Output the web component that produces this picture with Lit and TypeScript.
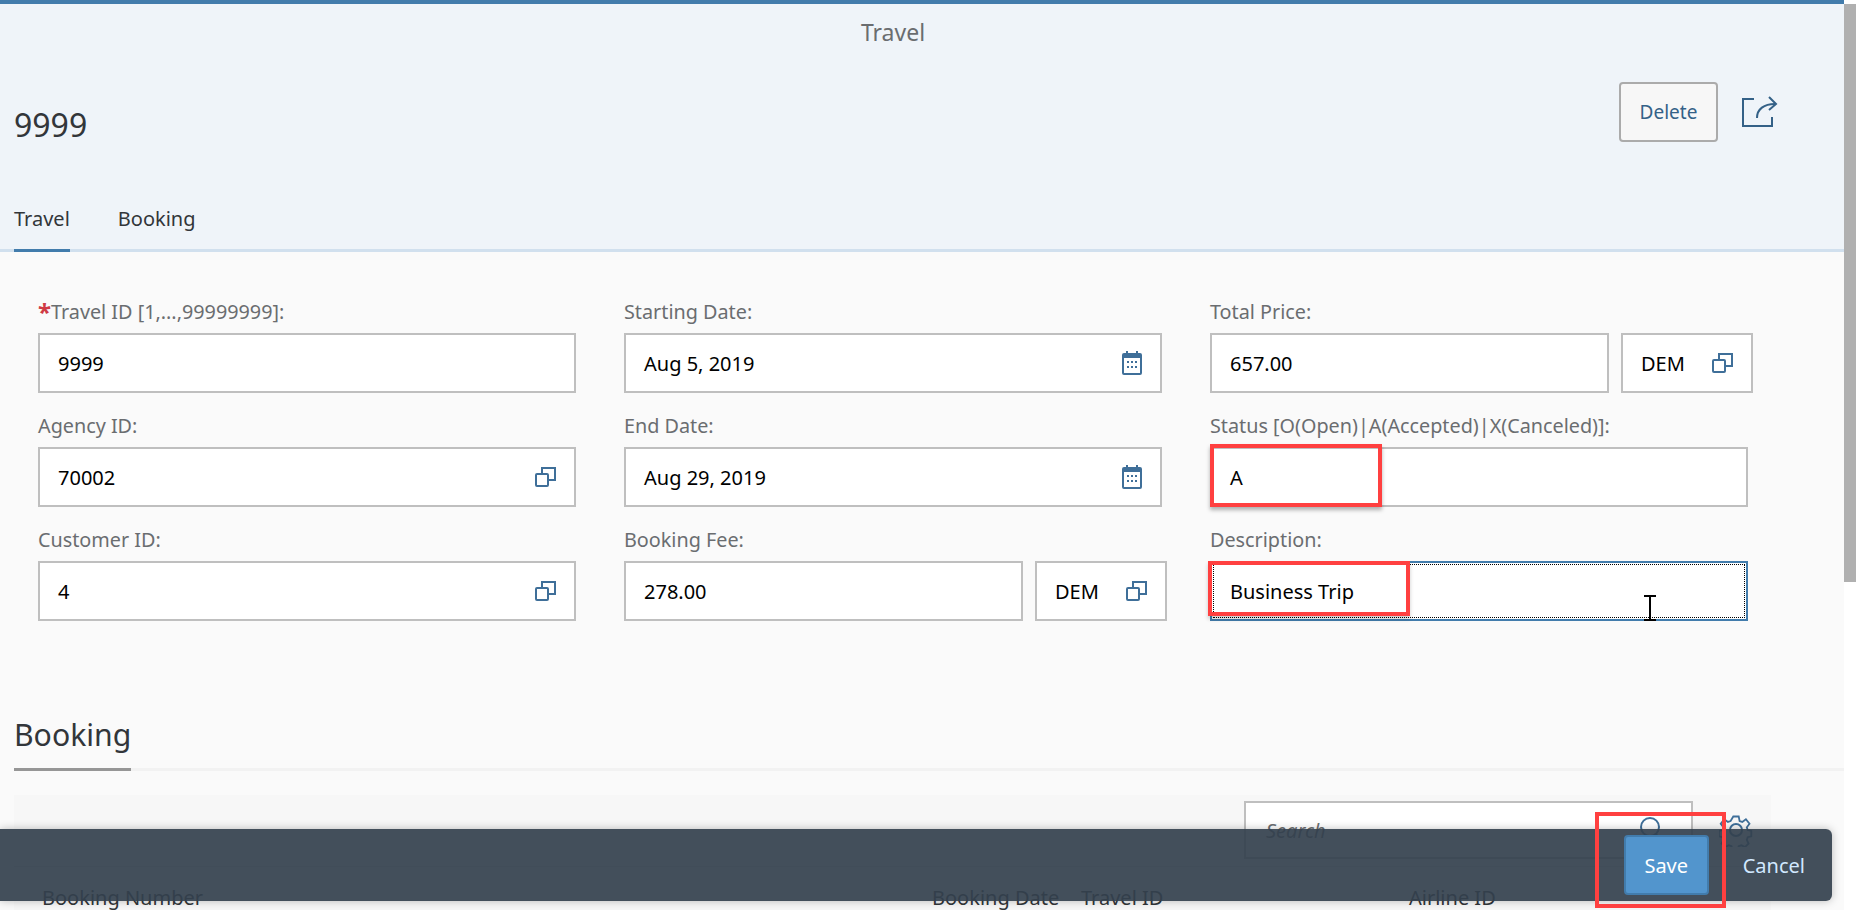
import { LitElement, html, css, svg } from 'lit';
import { customElement } from 'lit/decorators.js';

type Field = {
  label: string;
  value: string;
  required?: boolean;
  icon?: 'help' | 'date';
  currency?: string;
  focused?: boolean;
};

const COLUMNS: Field[][] = [
  [
    { label: 'Travel ID [1,...,99999999]:', value: '9999', required: true },
    { label: 'Agency ID:', value: '70002', icon: 'help' },
    { label: 'Customer ID:', value: '4', icon: 'help' },
  ],
  [
    { label: 'Starting Date:', value: 'Aug 5, 2019', icon: 'date' },
    { label: 'End Date:', value: 'Aug 29, 2019', icon: 'date' },
    { label: 'Booking Fee:', value: '278.00', currency: 'DEM' },
  ],
  [
    { label: 'Total Price:', value: '657.00', currency: 'DEM' },
    { label: 'Status [O(Open)|A(Accepted)|X(Canceled)]:', value: 'A' },
    { label: 'Description:', value: 'Business Trip', focused: true },
  ],
];

const helpIcon = html`<svg class="icon" width="21" height="20" viewBox="0 0 21 20" fill="none" stroke="#3f6f99" stroke-width="2">
  <rect x="1" y="7" width="12" height="12" rx="1"></rect>
  <path d="M7 6V1h13v12h-6"></path>
</svg>`;

const dateIcon = html`<svg class="icon" width="20" height="24" viewBox="0 0 20 24" fill="none">
  <rect x="1" y="3" width="18" height="20" rx="1" stroke="#3f6f99" stroke-width="2"></rect>
  <rect x="1" y="3" width="18" height="4" fill="#3f6f99"></rect>
  <path d="M5 0v4M15 0v4" stroke="#3f6f99" stroke-width="2"></path>
  ${[6, 10, 14].flatMap((x) =>
    [11, 16].map((y) => svg`<rect x="${x - 1}" y="${y - 1}" width="2" height="2" fill="#3f6f99"></rect>`)
  )}
</svg>`;

const shareIcon = html`<svg width="36" height="32" viewBox="0 0 36 32" fill="none" stroke="#346187" stroke-width="2">
  <path d="M12 3H1v27h29v-9"></path>
  <path d="M15 22c0-9 7-14 18-14"></path>
  <path d="M27 1l7 7-7 6"></path>
</svg>`;

const gearIcon = html`<svg width="34" height="34" viewBox="0 0 34 34" fill="none" stroke="#3f6f99" stroke-width="2">
  <circle cx="17" cy="17" r="6"></circle>
  <path d="M14 2h6l1 5 3 1 4-3 4 5-3 4 1 3 4 1v6l-4 1-1 3 2 4-4 4-4-2-3 1-1 4h-6l-1-4-3-1-4 2-4-4 2-4-1-3-4-1v-6l4-1 1-3-3-4 4-5 4 3 3-1z" transform="translate(1.7 1.7) scale(.9)"></path>
</svg>`;

const searchIcon = html`<svg width="24" height="28" viewBox="0 0 24 28" fill="none" stroke="#3f6f99" stroke-width="2">
  <circle cx="11" cy="11" r="9"></circle>
  <path d="M17 18l6 8"></path>
</svg>`;

@customElement('app-root')
export class AppRoot extends LitElement {
  static styles = css`
    :host {
      display: block;
      position: relative;
      height: 910px;
      overflow: hidden;
      background: #fff;
      font-family: 'Noto Sans', 'Liberation Sans', sans-serif;
      color: #32363a;
    }

    .page {
      margin-right: 12px;
      height: 910px;
      overflow: hidden;
      background: #fafafa;
    }

    .header {
      background: #eff4f9;
      border-top: 4px solid #427cac;
      border-bottom: 3px solid #d1e0ee;
      height: 245px;
      display: flex;
      flex-direction: column;
    }

    .app-title {
      height: 58px;
      line-height: 57px;
      padding-right: 58px;
      text-align: center;
      font-size: 23px;
      color: #6a6d70;
    }

    .heading {
      display: flex;
      align-items: center;
      height: 60px;
      margin-top: 20px;
      padding-left: 14px;
    }

    .heading h1 {
      flex: 1;
      margin: 0;
      padding-top: 24px;
      font-size: 32px;
      font-weight: 400;
    }

    .delete {
      width: 99px;
      height: 60px;
      box-sizing: border-box;
      border: 2px solid #ababab;
      border-radius: 4px;
      background: #f7f7f7;
      color: #346187;
      font: inherit;
      font-size: 19px;
      padding: 0;
    }

    .share {
      display: flex;
      margin: 0 66px 0 24px;
    }

    .tabs {
      display: flex;
      gap: 48px;
      margin-top: auto;
      padding-left: 14px;
      font-size: 20px;
    }

    .tab {
      height: 60px;
      line-height: 54px;
      margin-bottom: -3px;
      box-sizing: border-box;
    }

    .tab.active {
      border-bottom: 3px solid #427cac;
    }

    .form {
      display: grid;
      grid-template-columns: repeat(3, 538px);
      gap: 48px;
      padding: 27px 0 0 38px;
    }

    .col {
      display: flex;
      flex-direction: column;
    }

    .label {
      height: 54px;
      box-sizing: border-box;
      padding-bottom: 8px;
      display: flex;
      align-items: flex-end;
      font-size: 19.8px;
      color: #6a6d70;
      white-space: nowrap;
    }

    .req {
      color: #cf3a44;
      font-size: 24px;
      line-height: 26px;
      font-weight: 700;
    }

    .controls {
      display: flex;
      gap: 12px;
      margin-right: -5px;
    }

    .box {
      height: 60px;
      box-sizing: border-box;
      border: 2px solid #bfbfbf;
      background: #fff;
      display: flex;
      align-items: center;
      justify-content: space-between;
      padding: 0 18px;
      font-size: 20px;
      color: #000;
    }

    .controls .box {
      flex: 1;
      min-width: 0;
    }

    .controls .unit {
      flex: 0 0 132px;
    }

    .focused {
      position: relative;
      border-color: #427cac;
    }

    .focused::after {
      content: '';
      position: absolute;
      inset: 1px;
      border: 1px dotted #000;
    }

    .icon {
      flex: none;
    }

    .section-wrap {
      margin: 90px 0 0 14px;
      border-bottom: 3px solid #f2f2f2;
      display: flex;
    }

    .section-title {
      margin: 0 0 -3px;
      box-sizing: border-box;
      font-size: 30.2px;
      font-weight: 400;
      height: 60px;
      line-height: 48px;
      border-bottom: 3px solid #969696;
    }

    .table {
      margin: 24px 73px 0 14px;
      height: 130px;
      background: #f7f7f7;
    }

    .toolbar {
      display: flex;
      align-items: center;
      padding: 6px 18px 0 0;
      justify-content: flex-end;
      gap: 26px;
      height: 58px;
    }

    .search {
      width: 449px;
      height: 58px;
      box-sizing: border-box;
      border: 2px solid #bfbfbf;
      background: #fff;
      display: flex;
      align-items: center;
      justify-content: space-between;
      padding: 0 28px 0 20px;
      font-size: 20px;
      font-style: italic;
      color: #6a6d70;
    }

    .columns {
      margin-top: 7px;
      border-top: 1px solid #e5e5e5;
      display: grid;
      grid-template-columns: 890px 149px 328px 1fr;
      padding: 17px 0 0 28px;
      font-size: 20px;
    }

    .footer {
      position: absolute;
      left: 0;
      top: 829px;
      width: 1832px;
      height: 72px;
      box-sizing: border-box;
      background: rgba(51, 64, 77, 0.92);
      border-radius: 0 6px 6px 0;
      box-shadow: 0 0 8px rgba(0, 0, 0, 0.25);
      display: flex;
      align-items: center;
      justify-content: flex-end;
      padding-right: 27px;
      gap: 34px;
    }

    .save {
      width: 85px;
      height: 60px;
      border: 2px solid #427cac;
      border-radius: 4px;
      background: #5295cd;
      color: #fff;
      font: inherit;
      font-size: 20px;
      padding: 0;
    }

    .cancel {
      color: #d1e8ff;
      font-size: 20px;
    }

    .scrollbar {
      position: absolute;
      top: 4px;
      right: 0;
      width: 12px;
      height: 578px;
      background: #b0b0b0;
    }

    .mark {
      position: absolute;
      box-sizing: border-box;
      border: 4px solid #ff4040;
    }

    .mark.status {
      left: 1210px;
      top: 444px;
      width: 172px;
      height: 63px;
      box-shadow: 0 3px 4px rgba(0, 0, 0, 0.3);
    }

    .mark.description {
      left: 1208px;
      top: 561px;
      width: 202px;
      height: 55px;
      box-shadow: 0 3px 4px rgba(0, 0, 0, 0.2);
    }

    .mark.action {
      left: 1595px;
      top: 812px;
      width: 131px;
      height: 96px;
    }

    .cursor {
      position: absolute;
      left: 1643px;
      top: 595px;
    }
  `;

  private renderControl(f: Field) {
    const box = html`<div class="box ${f.focused ? 'focused' : ''}">
      <span>${f.value}</span>${f.icon === 'help' ? helpIcon : f.icon === 'date' ? dateIcon : ''}
    </div>`;
    if (!f.currency) return box;
    return html`<div class="controls">
      ${box}
      <div class="box unit"><span>${f.currency}</span>${helpIcon}</div>
    </div>`;
  }

  render() {
    return html`
      <div class="page">
        <header class="header">
          <div class="app-title">Travel</div>
          <div class="heading">
            <h1>9999</h1>
            <button class="delete">Delete</button>
            <span class="share">${shareIcon}</span>
          </div>
          <nav class="tabs">
            <div class="tab active">Travel</div>
            <div class="tab">Booking</div>
          </nav>
        </header>

        <section class="form">
          ${COLUMNS.map(
            (col) => html`<div class="col">
              ${col.map(
                (f) => html`<div class="label">
                    ${f.required ? html`<span class="req">*</span>` : ''}${f.label}
                  </div>
                  ${this.renderControl(f)}`
              )}
            </div>`
          )}
        </section>

        <div class="section-wrap"><h2 class="section-title">Booking</h2></div>
        <div class="table">
          <div class="toolbar">
            <div class="search"><span>Search</span>${searchIcon}</div>
            ${gearIcon}
          </div>
          <div class="columns">
            <span>Booking Number</span>
            <span>Booking Date</span>
            <span>Travel ID</span>
            <span>Airline ID</span>
          </div>
        </div>
      </div>

      <footer class="footer">
        <button class="save">Save</button>
        <span class="cancel">Cancel</span>
      </footer>

      <div class="scrollbar"></div>
      <div class="mark status"></div>
      <div class="mark description"></div>
      <div class="mark action"></div>
      <svg class="cursor" width="14" height="26" viewBox="0 0 14 26" fill="none" stroke="#000" stroke-width="2">
        <path d="M1 1h12M7 1v24M1 25h12"></path>
      </svg>
    `;
  }
}
